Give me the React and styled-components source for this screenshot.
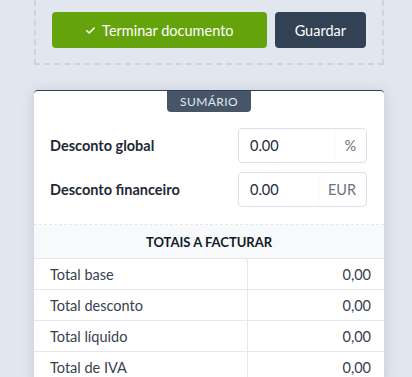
import styled, { createGlobalStyle } from 'styled-components';

const GlobalStyle = createGlobalStyle`
  * { box-sizing: border-box; }
  body {
    margin: 0;
    background: #e2e6ee;
    font-family: Lato, 'Open Sans', sans-serif;
    color: #1f2937;
  }
`;

const Page = styled.main`
  width: 412px;
  padding: 0 28px 0 34px;
`;

const ActionBox = styled.section`
  display: flex;
  gap: 8px;
  padding: 12px 16px 15px;
  border: 2px dashed #cfd4dc;
  border-top: none;
`;

const Button = styled.button`
  height: 36px;
  border: none;
  border-radius: 4px;
  font-family: inherit;
  font-size: 14.5px;
  color: #fff;
  display: flex;
  align-items: center;
  justify-content: center;
  gap: 6px;
  padding: 0 20px;
  background: ${(p) => (p.primary ? '#65a30d' : '#334155')};
  flex: ${(p) => (p.primary ? 1 : 'none')};
`;

const Card = styled.section`
  margin-top: 25px;
  background: #fff;
  border-top: 1px solid #334155;
  border-radius: 4px 4px 0 0;
  box-shadow: 0 2px 12px rgba(100, 110, 140, 0.25);
  display: flex;
  flex-direction: column;
`;

const Badge = styled.div`
  align-self: center;
  background: #475569;
  color: #e2e8f0;
  font-size: 12px;
  letter-spacing: 0.4px;
  height: 21px;
  line-height: 21px;
  padding: 0 13px;
  border-radius: 0 0 4px 4px;
`;

const Form = styled.div`
  display: flex;
  flex-direction: column;
  gap: 9px;
  padding: 16px 17px 17px 16px;
  border-bottom: 1px dashed #e5e7eb;
`;

const Field = styled.div`
  display: flex;
  align-items: center;
  justify-content: space-between;
`;

const Label = styled.label`
  font-size: 14.5px;
  font-weight: 700;
  color: #1f2937;
`;

const InputGroup = styled.div`
  width: 129px;
  height: 35px;
  display: flex;
  align-items: center;
  border: 1px solid #dde1e7;
  border-radius: 4px;
`;

const Input = styled.div`
  flex: 1;
  height: 100%;
  display: flex;
  align-items: center;
  padding-left: 11px;
  font-size: 14.5px;
  color: #1f2937;
  border-right: 1px solid #fafbfc;
`;

const Suffix = styled.span`
  padding: 0 10px 0 8px;
  font-size: 14.5px;
  color: #6b7280;
`;

const TotalsHead = styled.div`
  background: #f8f9fb;
  height: 33px;
  display: flex;
  align-items: center;
  justify-content: center;
  font-size: 13px;
  font-weight: 700;
  color: #111827;
`;

const Row = styled.div`
  display: grid;
  grid-template-columns: 213px 1fr;
  height: 31px;
  border-top: 1px solid #e5e7eb;
  font-size: 14.5px;
  color: #374151;
`;

const Cell = styled.div`
  display: flex;
  align-items: center;
  padding: ${(p) => (p.value ? '0 13px 0 0' : '0 0 0 16px')};
  justify-content: ${(p) => (p.value ? 'flex-end' : 'flex-start')};
  border-left: ${(p) => (p.value ? '1px solid #e5e7eb' : 'none')};
`;

const Check = () => (
  <svg width="11" height="11" viewBox="0 0 24 24" fill="none" stroke="currentColor" strokeWidth="3.5" strokeLinecap="round" strokeLinejoin="round">
    <path d="M4 12.5l5 5L20 6.5" />
  </svg>
);

const totals = ['Total base', 'Total desconto', 'Total líquido', 'Total de IVA'];

export default function App() {
  return (
    <>
      <GlobalStyle />
      <Page>
        <ActionBox>
          <Button primary>
            <Check />
            Terminar documento
          </Button>
          <Button>Guardar</Button>
        </ActionBox>
        <Card>
          <Badge>SUMÁRIO</Badge>
          <Form>
            <Field>
              <Label>Desconto global</Label>
              <InputGroup>
                <Input>0.00</Input>
                <Suffix>%</Suffix>
              </InputGroup>
            </Field>
            <Field>
              <Label>Desconto financeiro</Label>
              <InputGroup>
                <Input>0.00</Input>
                <Suffix>EUR</Suffix>
              </InputGroup>
            </Field>
          </Form>
          <TotalsHead>TOTAIS A FACTURAR</TotalsHead>
          {totals.map((t) => (
            <Row key={t}>
              <Cell>{t}</Cell>
              <Cell value>0,00</Cell>
            </Row>
          ))}
        </Card>
      </Page>
    </>
  );
}
